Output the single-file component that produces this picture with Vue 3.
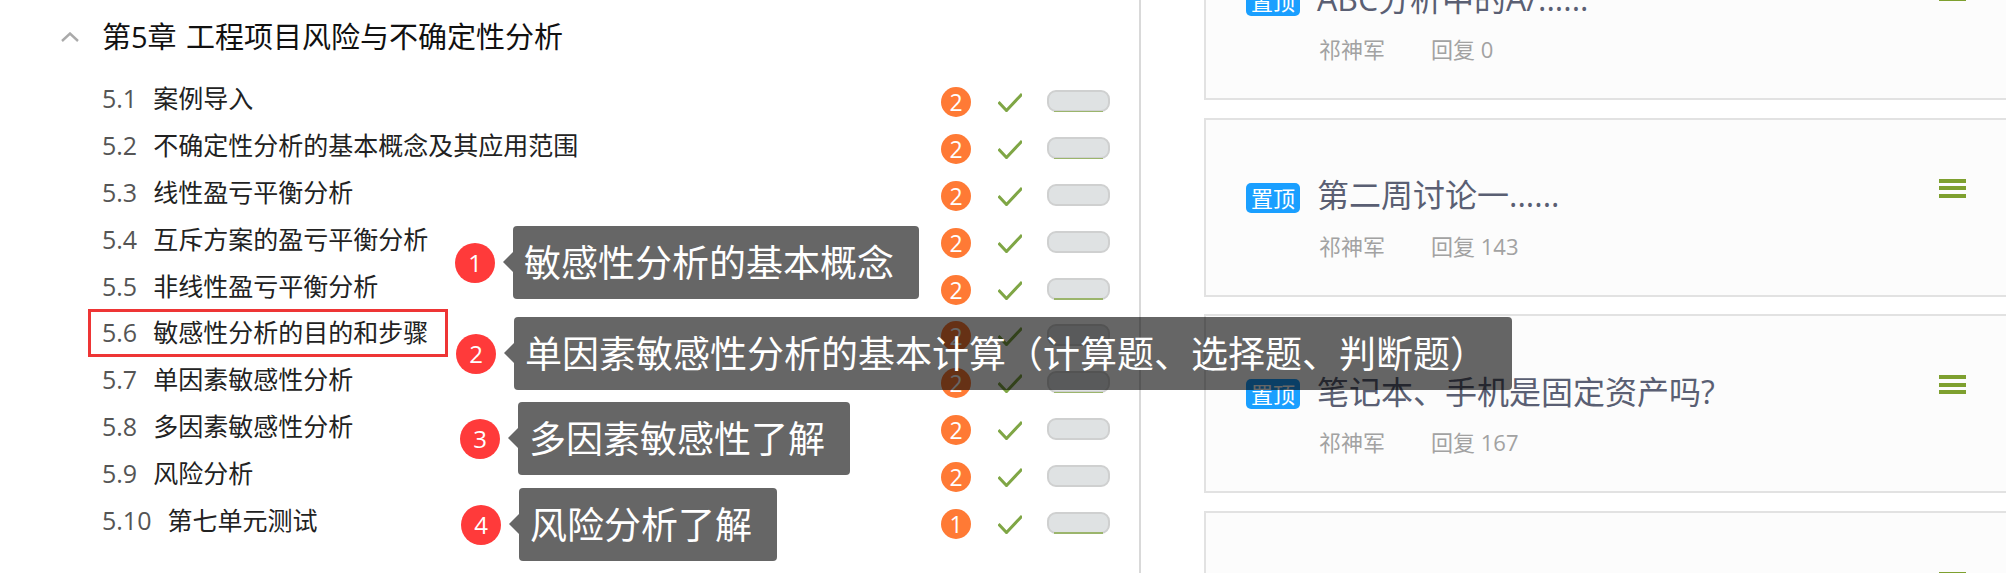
<script setup>
const lessons = [
  { no: '5.1', name: '案例导入', count: 2, done: true },
  { no: '5.2', name: '不确定性分析的基本概念及其应用范围', count: 2, done: true },
  { no: '5.3', name: '线性盈亏平衡分析', count: 2, done: false },
  { no: '5.4', name: '互斥方案的盈亏平衡分析', count: 2, done: false },
  { no: '5.5', name: '非线性盈亏平衡分析', count: 2, done: true },
  { no: '5.6', name: '敏感性分析的目的和步骤', count: 2, done: false },
  { no: '5.7', name: '单因素敏感性分析', count: 2, done: true },
  { no: '5.8', name: '多因素敏感性分析', count: 2, done: false },
  { no: '5.9', name: '风险分析', count: 2, done: false },
  { no: '5.10', name: '第七单元测试', count: 1, done: true }
]

const topics = [
  { title: 'ABC分析中的A/......', replies: 0 },
  { title: '第二周讨论一......', replies: 143 },
  { title: '笔记本、手机是固定资产吗?', replies: 167 },
  { title: '', replies: 0 }
]

const notes = [
  { id: 1, left: 455, top: 226, text: '敏感性分析的基本概念' },
  { id: 2, left: 456, top: 317, text: '单因素敏感性分析的基本计算（计算题、选择题、判断题）' },
  { id: 3, left: 460, top: 402, text: '多因素敏感性了解' },
  { id: 4, left: 461, top: 488, text: '风险分析了解' }
]
</script>

<template>
  <div class="page">
    <section class="chapter">
      <header class="chapter-head">
        <svg class="chevron" width="18" height="10" viewBox="0 0 18 10">
          <polyline points="1,9 9,1.5 17,9" fill="none" stroke="#aaa" stroke-width="2.4" />
        </svg>
        <h2>第5章 工程项目风险与不确定性分析</h2>
      </header>
      <ul class="lessons">
        <li v-for="item in lessons" :key="item.no" class="lesson">
          <span class="lesson-title"><span class="no">{{ item.no }}</span>{{ item.name }}</span>
          <span class="count">{{ item.count }}</span>
          <svg class="check" width="24" height="20" viewBox="0 0 24 20">
            <polyline points="0.5,10 8.5,18.5 24,2" fill="none" stroke="#7fa645" stroke-width="3" />
          </svg>
          <span class="progress" :class="{ done: item.done }"></span>
        </li>
      </ul>
    </section>

    <section class="topics">
      <article v-for="(topic, index) in topics" :key="index" class="topic">
        <div class="topic-head">
          <span v-if="topic.title" class="pin">置顶</span>
          <span class="topic-title">{{ topic.title }}</span>
          <span class="menu"><i></i><i></i><i></i></span>
        </div>
        <div v-if="topic.title" class="meta">
          <span>祁神军</span>
          <span>回复 {{ topic.replies }}</span>
        </div>
      </article>
    </section>

    <div class="current-box"></div>

    <div
      v-for="note in notes"
      :key="note.id"
      class="note"
      :style="{ left: note.left + 'px', top: note.top + 'px' }"
    >
      <span class="note-no">{{ note.id }}</span>
      <span class="note-text">{{ note.text }}</span>
    </div>
  </div>
</template>

<style scoped>
.page {
  position: relative;
  display: flex;
  width: 2006px;
  height: 573px;
  overflow: hidden;
  background: #fff;
  font-family: "Open Sans", "Noto Sans CJK SC", sans-serif;
}

.chapter {
  width: 1141px;
  height: 573px;
  box-sizing: border-box;
  flex-shrink: 0;
  padding: 0 29px 0 61px;
  border-right: 2px solid #d9d9d9;
}

.chapter-head {
  display: flex;
  align-items: center;
  gap: 23px;
  height: 70px;
  margin-bottom: 9px;
}

.chevron {
  flex-shrink: 0;
  margin-top: 3px;
}

.chapter-head h2 {
  margin: 0;
  font-size: 29px;
  font-weight: 400;
  word-spacing: 2px;
  color: #111;
  white-space: nowrap;
}

.lessons {
  margin: 0;
  padding: 0;
  list-style: none;
}

.lesson {
  display: flex;
  align-items: center;
  height: 46.8px;
}

.lesson-title {
  flex: 1;
  padding: 0 0 8px 41px;
  font-size: 25px;
  line-height: 38px;
  color: #222;
  white-space: nowrap;
}

.no {
  margin-right: 16px;
  color: #555;
}

.count {
  width: 30px;
  height: 30px;
  border-radius: 50%;
  background: #ff7a35;
  color: #fff;
  font-size: 23px;
  line-height: 30px;
  text-align: center;
}

.check {
  margin: 0 25px 0 27px;
}

.progress {
  position: relative;
  width: 63px;
  height: 22px;
  margin-bottom: 2px;
  box-sizing: border-box;
  border: 2px solid #cfd0d0;
  border-radius: 9px;
  background: #dfe2e3;
}

.progress.done::after {
  content: "";
  position: absolute;
  left: 5px;
  right: 5px;
  bottom: -2px;
  height: 1.5px;
  background: #9bb56c;
}

.topics {
  margin: -79px 0 0 63px;
}

.topic {
  width: 840px;
  height: 179px;
  box-sizing: border-box;
  margin-bottom: 17.5px;
  padding: 56px 76px 0 40px;
  border: 2px solid #e2e2e2;
  background: #fcfcfc;
}

.topic-head {
  display: flex;
  align-items: center;
  height: 44px;
}

.pin {
  width: 54px;
  height: 30px;
  margin-right: 17px;
  border-radius: 5px;
  background: #1a9fff;
  color: #fff;
  font-size: 22px;
  line-height: 30px;
  text-align: center;
}

.topic-title {
  flex: 1;
  padding-bottom: 9px;
  font-size: 32px;
  color: #5a5f73;
  white-space: nowrap;
}

.menu {
  display: flex;
  flex-direction: column;
  gap: 3.5px;
  align-self: flex-start;
  margin-top: 3px;
}

.menu i {
  display: block;
  width: 27px;
  height: 4px;
  background: #7ea02f;
}

.meta {
  display: flex;
  gap: 46px;
  margin: 11px 0 0 73px;
  font-size: 22px;
  line-height: 30px;
  color: #a2a2a2;
}

.current-box {
  position: absolute;
  left: 88px;
  top: 309px;
  width: 360px;
  height: 48px;
  box-sizing: border-box;
  border: 3px solid #ee3535;
}

.note {
  position: absolute;
  display: flex;
  align-items: center;
  gap: 18px;
}

.note-no {
  width: 40px;
  height: 40px;
  border-radius: 50%;
  background: #ff3a3a;
  color: #fff;
  font-size: 24px;
  line-height: 40px;
  text-align: center;
}

.note-text {
  position: relative;
  padding: 0 25px 0 11px;
  height: 73px;
  border-radius: 4px;
  background: rgba(0, 0, 0, 0.6);
  color: #fff;
  font-size: 37px;
  line-height: 73px;
  white-space: nowrap;
}

.note-text::before {
  content: "";
  position: absolute;
  left: -10px;
  top: 26px;
  border-style: solid;
  border-width: 10px 10px 10px 0;
  border-color: transparent rgba(0, 0, 0, 0.6) transparent transparent;
}
</style>

<style>
html,
body {
  margin: 0;
  overflow: hidden;
}
</style>
